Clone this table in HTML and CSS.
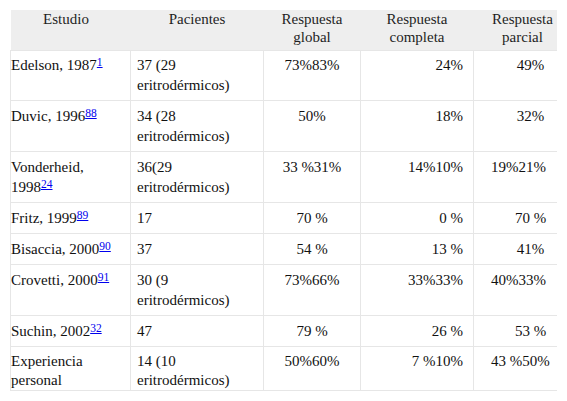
FILE: index.html
```html
<!DOCTYPE html>
<html lang="es">
<head>
<meta charset="utf-8">
<title>Tabla</title>
<link rel="stylesheet" href="styles.css">
</head>
<body>
<div class="wrap">
<table class="t">
<colgroup>
<col class="c1"><col class="c2"><col class="c3"><col class="c4"><col class="c5">
</colgroup>
<thead>
<tr>
<th class="h1">Estudio</th>
<th class="h2">Pacientes</th>
<th class="h3">Respuesta global</th>
<th class="h4">Respuesta completa</th>
<th class="h5">Respuesta parcial</th>
</tr>
</thead>
<tbody>
<tr class="first">
<td class="d1">Edelson, 1987<sup><a href="#">1</a></sup></td>
<td class="d2">37 (29 eritrodérmicos)</td>
<td class="d3">73%83%</td>
<td class="d4">24%</td>
<td class="d5">49%</td>
</tr>
<tr>
<td class="d1">Duvic, 1996<sup><a href="#">88</a></sup></td>
<td class="d2">34 (28 eritrodérmicos)</td>
<td class="d3">50%</td>
<td class="d4">18%</td>
<td class="d5">32%</td>
</tr>
<tr>
<td class="d1">Vonderheid, 1998<sup><a href="#">24</a></sup></td>
<td class="d2">36(29 eritrodérmicos)</td>
<td class="d3">33 %31%</td>
<td class="d4">14%10%</td>
<td class="d5 wide">19%21%</td>
</tr>
<tr>
<td class="d1">Fritz, 1999<sup><a href="#">89</a></sup></td>
<td class="d2">17</td>
<td class="d3">70 %</td>
<td class="d4">0 %</td>
<td class="d5">70 %</td>
</tr>
<tr>
<td class="d1">Bisaccia, 2000<sup><a href="#">90</a></sup></td>
<td class="d2">37</td>
<td class="d3">54 %</td>
<td class="d4">13 %</td>
<td class="d5">41%</td>
</tr>
<tr>
<td class="d1">Crovetti, 2000<sup><a href="#">91</a></sup></td>
<td class="d2">30 (9 eritrodérmicos)</td>
<td class="d3">73%66%</td>
<td class="d4">33%33%</td>
<td class="d5 wide">40%33%</td>
</tr>
<tr>
<td class="d1">Suchin, 2002<sup><a href="#">32</a></sup></td>
<td class="d2">47</td>
<td class="d3">79 %</td>
<td class="d4">26 %</td>
<td class="d5">53 %</td>
</tr>
<tr class="last">
<td class="d1">Experiencia personal</td>
<td class="d2">14 (10 eritrodérmicos)</td>
<td class="d3">50%60%</td>
<td class="d4">7 %10%</td>
<td class="d5 wide">43 %50%</td>
</tr>
</tbody>
</table>
</div>
</body>
</html>
```
FILE: styles.css
```css
html, body {
  margin: 0;
  padding: 0;
  background: #ffffff;
}

body {
  font-family: "Liberation Serif", "Times New Roman", serif;
  font-size: 15px;
  color: #111111;
}

.wrap {
  margin: 10px 0 0 10px;
  width: 547px;
  overflow: hidden;
}

.t {
  border-collapse: collapse;
  table-layout: fixed;
  width: 561px;
  font-family: "Liberation Serif", "Times New Roman", serif;
  font-size: 15px;
}

.c1 { width: 120px; }
.c2 { width: 133px; }
.c3 { width: 97px; }
.c4 { width: 113px; }
.c5 { width: 98px; }

.t th {
  background: #eeeeee;
  font-weight: normal;
  color: #1e1e1e;
  line-height: 18px;
  height: 36px;
  padding: 0 4px 4px;
  vertical-align: top;
  text-align: center;
  border: none;
}

.t th.h1 { padding-right: 9px; padding-left: 0; }

.t td {
  border: 1px solid #e6e6e6;
  line-height: 20px;
  padding: 5px;
  vertical-align: top;
}

.t td.d1 { padding-left: 0; text-align: left; }
.t td.d2 { padding-left: 6px; text-align: left; }
.t td.d3 { text-align: center; }
.t td.d4 { text-align: right; padding-right: 10px; }
.t td.d5 { text-align: center; padding-left: 21px; padding-right: 5px; }
.t td.d5.wide { text-align: left; padding-left: 17px; }

.t tr.first td {
  padding-top: 4px;
}

.t tr.last td {
  padding-top: 5px;
  padding-bottom: 0;
  line-height: 19px;
}

.t sup {
  font-size: 11.5px;
  line-height: 0;
  vertical-align: 4px;
}

.t sup a {
  color: #0000ee;
  text-decoration: underline;
}
```
